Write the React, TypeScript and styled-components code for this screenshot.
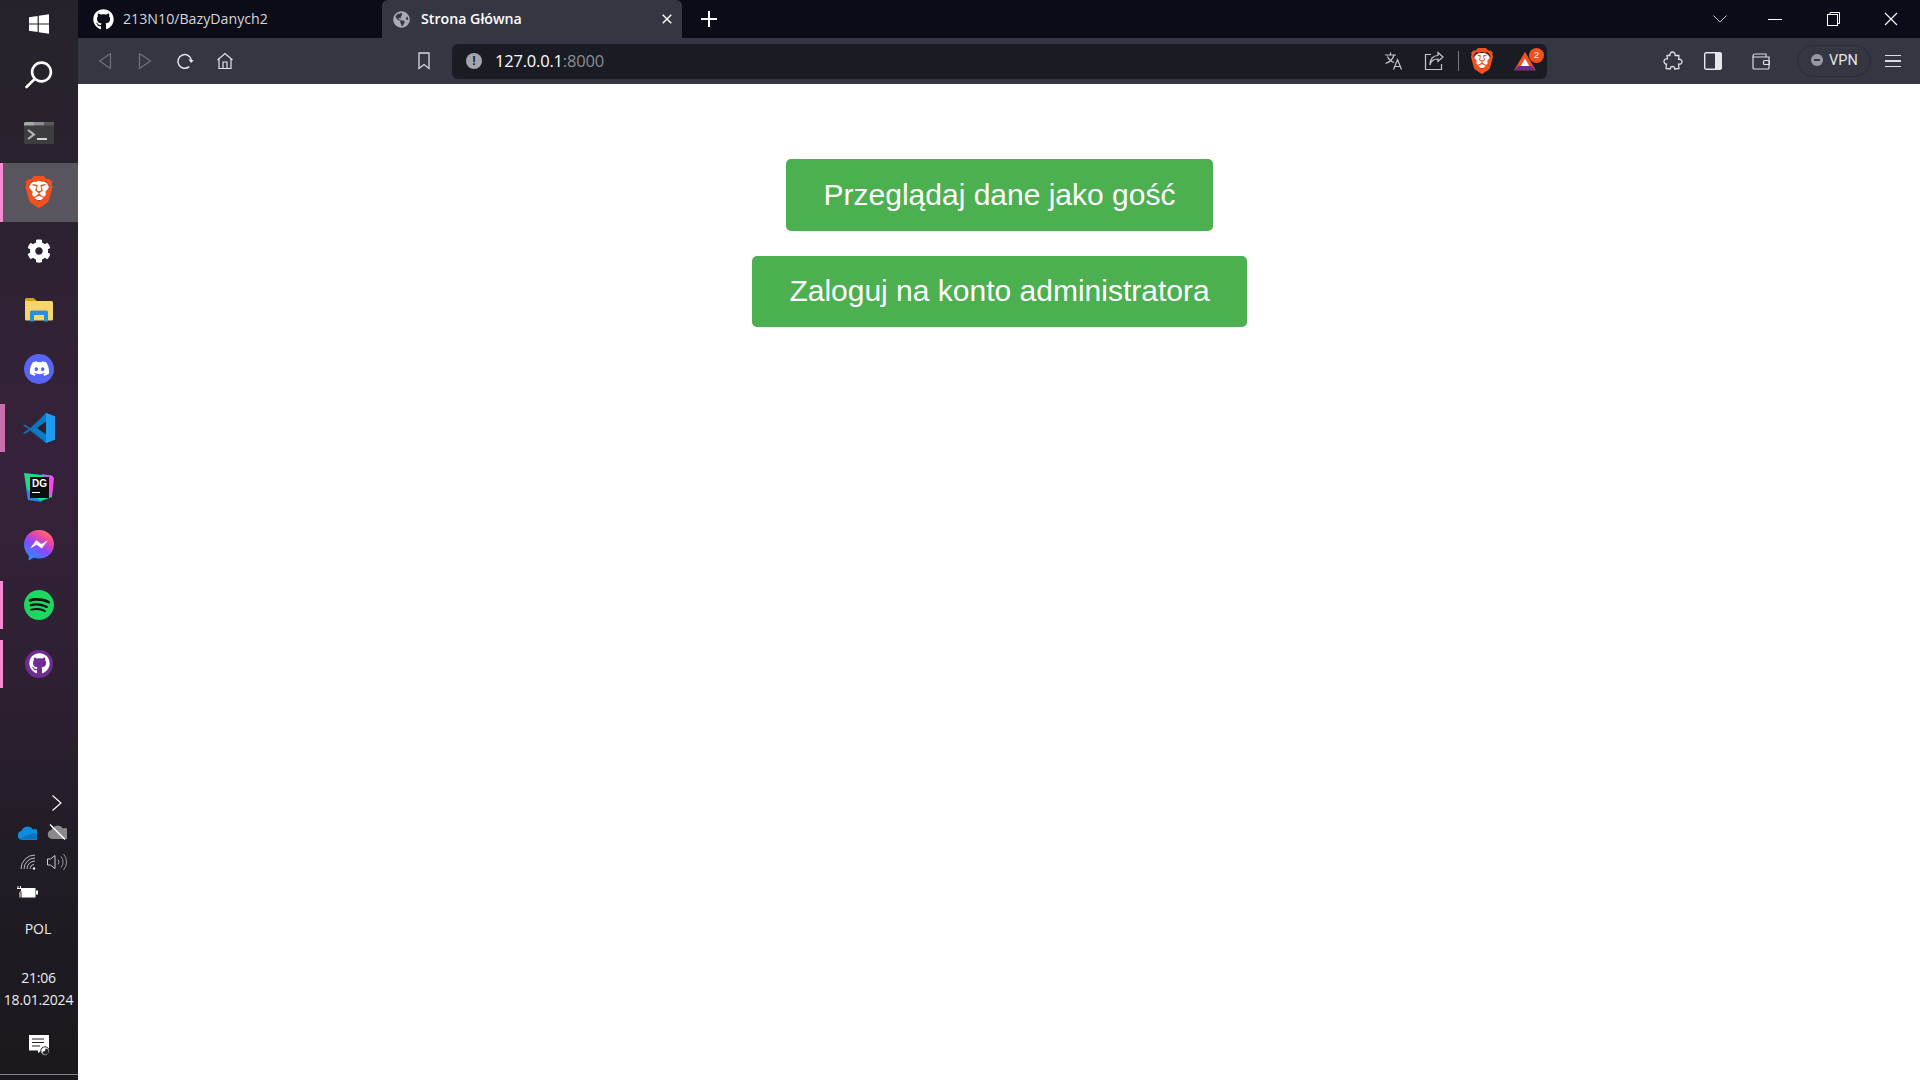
import React from 'react'
import styled, { createGlobalStyle } from 'styled-components'
import { FaCog, FaDiscord, FaGithub, FaGlobeAmericas } from 'react-icons/fa'
import { SiBrave, SiSpotify } from 'react-icons/si'

const GlobalStyle = createGlobalStyle`
  html, body { margin: 0; padding: 0; height: 100%; background: #fff; overflow: hidden; }
  #root { height: 100%; }
  * { box-sizing: border-box; }
`

const WindowsIcon = () => (
  <svg width="22" height="22" viewBox="0 0 22 22">
    <path d="M1 4.2 9.6 3v7.4H1zM10.8 2.8 21 1.2v9.2H10.8zM1 11.6h8.6V19L1 17.8zM10.8 11.6H21v9.2L10.8 19.2z" fill="#fff" />
  </svg>
)

const SearchIcon = () => (
  <svg width="30" height="30" viewBox="0 0 30 30" fill="none" stroke="#fff" strokeWidth="2.6" strokeLinecap="round">
    <circle cx="17.5" cy="12" r="9.4" />
    <path d="M10.8 18.8 2.5 27" />
  </svg>
)

const TerminalIcon = () => (
  <svg width="30" height="22" viewBox="0 0 30 22">
    <rect width="30" height="22" rx="1.5" fill="#3d3d3f" />
    <path d="M0 1.5A1.5 1.5 0 0 1 1.5 0H10v3.4H0z" fill="#a8a8a8" />
    <rect x="10" width="10" height="3.4" fill="#8c8c8c" />
    <rect x="20" width="10" height="3.4" fill="#5c5c5e" />
    <path d="m4 8 6 4.6L4 17" fill="none" stroke="#b9b9b9" strokeWidth="2" />
    <rect x="13" y="16" width="10" height="2" fill="#d6d6d6" />
  </svg>
)

const BraveIcon = ({ size }: { size: number }) => (
  <BraveWrap $size={size}>
    <BraveFace />
    <SiBrave size={size} color="#f1501f" />
  </BraveWrap>
)

const FolderIcon = () => (
  <svg width="28" height="24" viewBox="0 0 28 24">
    <path d="M0 1.5A1.5 1.5 0 0 1 1.5 0h7L12 3h-12z" fill="#d9a018" />
    <path d="M0 3h26.5A1.5 1.5 0 0 1 28 4.5V21a1.5 1.5 0 0 1-1.5 1.5h-25A1.5 1.5 0 0 1 0 21z" fill="#f7d56b" />
    <path d="M5 23.5V14a1.5 1.5 0 0 1 1.5-1.5h15A1.5 1.5 0 0 1 23 14v9.5h-4V17H9v6.5z" fill="#2d8fd0" />
  </svg>
)

const VsCodeIcon = () => (
  <svg width="32" height="32" viewBox="0 0 32 32">
    <path d="M23 1 32 4.5v23L23 31 9.5 18z" fill="#1f9cf0" />
    <path d="M23 1 7 16.2 2 12.4 0 13.6l5.7 3.4L0 21l2 1 5-3.4L23 31z" fill="#0a78bf" opacity=".92" />
    <path d="M23 9.5v13L13.8 16z" fill="#2a2232" />
    <path d="M23 1 32 4.5v23L23 31z" fill="#1f9cf0" />
  </svg>
)

const DataGripIcon = () => (
  <IconStack>
    <svg width="30" height="30" viewBox="0 0 30 30">
      <path d="M0 1 18 3 29 4 28 25 17 29 4 27 2 14z" fill="#22d88f" />
      <path d="M18 2 29 4 28 18 20 10z" fill="#9775f8" />
      <path d="M26 3 30 6 28 24 24 22z" fill="#ff45ed" />
      <path d="M2 16 14 27 18 30 4 28z" fill="#2f80ed" />
    </svg>
    <DgTile>
      DG
      <DgBar />
    </DgTile>
  </IconStack>
)

const MessengerIcon = () => (
  <svg width="30" height="31" viewBox="0 0 30 31">
    <defs>
      <linearGradient id="msgGrad" x1="0.2" y1="1" x2="0.8" y2="0">
        <stop offset="0" stopColor="#1497ff" />
        <stop offset="0.45" stopColor="#8d47ff" />
        <stop offset="0.75" stopColor="#f2489c" />
        <stop offset="1" stopColor="#ff7a5c" />
      </linearGradient>
    </defs>
    <path d="M15 0C6.5 0 0 6.2 0 14.5c0 4.4 1.8 8.2 4.7 10.8v5.2l4.9-2.700c1.700.5 3.500.8 5.400.8 8.500 0 15-6.200 15-14.100C30 6.200 23.500 0 15 0z" fill="url(#msgGrad)" />
    <path d="m6 18.5 6.300-8.200 5 3.800 6.700-3.800-6.300 8.200-5-3.800z" fill="#fff" />
  </svg>
)

const SpotifyIcon = () => (
  <IconStack>
    <SpotifyBack />
    <SiSpotify size={30} color="#1ed760" />
  </IconStack>
)

const CloudPath = 'M5 15a4.5 4.5 0 0 1-.6-8.9A6.5 6.5 0 0 1 16 4.5 4.8 4.8 0 0 1 20 15z'

const OneDriveIcon = () => (
  <svg width="20" height="15" viewBox="0 0 20 15">
    <path d={CloudPath} fill="#0f8bdc" />
    <path d="M2 14.5h17a3 3 0 0 0 1-4.5c-2-1.800-4-1.500-6-1-3 1-6 2-12 5.500z" fill="#0a5ea8" opacity=".55" />
  </svg>
)

const CloudOffIcon = () => (
  <svg width="20" height="16" viewBox="0 0 20 16">
    <path d={CloudPath} fill="#8a8a8c" />
    <path d="M3 .5 18 15.5" stroke="#fff" strokeWidth="1.4" />
  </svg>
)

const WifiIcon = () => (
  <svg width="16" height="16" viewBox="0 0 16 16" fill="none" stroke="#cfcfcf" strokeWidth=".9">
    <path d="M1 15A14 14 0 0 1 15 1M4 15A11 11 0 0 1 15 4M7 15a8 8 0 0 1 8-8M10 15a5 5 0 0 1 4-4.8" />
    <circle cx="14" cy="14.5" r="1.2" fill="#eee" stroke="none" />
  </svg>
)

const SoundIcon = () => (
  <svg width="20" height="18" viewBox="0 0 20 18" fill="none" stroke="#cfcfcf" strokeWidth="1">
    <path d="M.5 6h3L8 2.5v13L3.500 12H.5z" />
    <path d="M11 6.5a4 4 0 0 1 0 5M14 3.5a9 9 0 0 1 0 11M16.500 1a12 12 0 0 1 0 16" stroke="#9a9a9a" />
  </svg>
)

const BatteryIcon = () => (
  <svg width="21" height="12" viewBox="0 0 21 12">
    <path d="M1 0v2M3.5 0v2M0 2.500h4.500V5L3 6.500v5" fill="none" stroke="#fff" strokeWidth="1" />
    <rect x="4.5" y="2" width="14" height="9.5" fill="#fff" />
    <rect x="19" y="4.5" width="2" height="4" fill="#fff" />
  </svg>
)

const NotificationIcon = () => (
  <svg width="21" height="21" viewBox="0 0 21 21">
    <path d="M0 0h20v15.5h-7L9 18v-2.500H0z" fill="#fff" />
    <path d="M3 4h12M3 7.5h12M3 11h8" stroke="#28232a" strokeWidth="1.2" />
    <circle cx="16" cy="16" r="4.2" fill="#fff" stroke="#28232a" />
    <path d="M16.5 13.5a3 3 0 1 1-3 3c2 .5 3-1 3-3z" fill="#28232a" />
  </svg>
)

const BackIcon = ({ flip }: { flip?: boolean }) => (
  <svg width="14" height="18" viewBox="0 0 14 18" fill="none" stroke="#6c6f79" strokeWidth="1.3" style={flip ? { transform: 'scaleX(-1)' } : undefined}>
    <path d="M12.5 1.5v15L1.500 9z" strokeLinejoin="round" />
  </svg>
)

const ReloadIcon = () => (
  <svg width="18" height="18" viewBox="0 0 18 18" fill="none" stroke="#e4e5e8" strokeWidth="1.5">
    <path d="M15.5 8.5A6.8 6.8 0 1 0 13.2 14.6" />
    <path d="M12 7.8h5.500L15.500 11z" fill="#e4e5e8" stroke="none" transform="rotate(10 15 9)" />
  </svg>
)

const HomeIcon = () => (
  <svg width="18" height="18" viewBox="0 0 18 18" fill="none" stroke="#e4e5e8" strokeWidth="1.2">
    <path d="M1.5 8 9 1.500 16.500 8M3 7v9.500h12V7" />
    <path d="M7 16.5V10h4v6.500" />
  </svg>
)

const BookmarkIcon = () => (
  <svg width="12" height="18" viewBox="0 0 12 18" fill="none" stroke="#d8d9dd" strokeWidth="1.3">
    <path d="M1 1h10v15.5l-5-4-5 4z" />
  </svg>
)

const TranslateIcon = () => (
  <svg width="20" height="20" viewBox="0 0 20 20" fill="none" stroke="#c6c7cc" strokeWidth="1.2">
    <path d="M1 4h11M6.500 1.500V4M10 4c-1 4-4 7-8.500 8.500M3.500 5.500C5 9 7.500 10.500 10 11.500" />
    <path d="m9.500 18.500 4-10 4 10M11 15.500h5" />
  </svg>
)

const ShareIcon = () => (
  <svg width="20" height="20" viewBox="0 0 20 20" fill="none" stroke="#c6c7cc" strokeWidth="1.2">
    <path d="M7 3.500H1.500v15h16V13" />
    <path d="M14 1.500 19 6l-5 4.500V8c-4 0-7 1.500-8 6 0-6 3-9.500 8-9.500z" />
  </svg>
)

const RewardsIcon = () => (
  <svg width="24" height="20" viewBox="0 0 26 24">
    <path d="M13 1 26 23H0z" fill="#f1501f" />
    <path d="M0 23h26l-5-5H5z" fill="#6b2a8e" />
    <path d="M13 9 18 18H8z" fill="#fff" />
  </svg>
)

const PuzzleIcon = () => (
  <svg width="20" height="20" viewBox="0 0 20 20" fill="none" stroke="#dcdde0" strokeWidth="1.3" strokeLinejoin="round">
    <path d="M7 4.500C6.500 2.500 8 1 9.500 1s3 1.500 2.500 3.500h4l-.5 4c2-.8 3.500.5 3.500 2.200s-1.500 3-3.500 2.300l.5 4.500-4.500.5c.5-1.500-.5-2.500-2-2.500s-2.500 1-2 2.500l-4.500-.5.500-4.500C2.500 13.500 1 12 1 10.300s1.500-3 3.500-2.300L4 4.500z" />
  </svg>
)

const SidebarIcon = () => (
  <svg width="18" height="18" viewBox="0 0 18 18">
    <rect x=".7" y=".7" width="16.6" height="16.6" rx="1.5" fill="none" stroke="#e6e7ea" strokeWidth="1.4" />
    <rect x="11" y="1" width="6.5" height="16" fill="#e6e7ea" />
  </svg>
)

const WalletIcon = () => (
  <svg width="18" height="18" viewBox="0 0 18 18" fill="none" stroke="#dcdde0" strokeWidth="1.2">
    <path d="M1 4V16a1 1 0 0 0 1 1h14a1 1 0 0 0 1-1V5H2a1 1 0 0 1-1-1 2 2 0 0 1 2-2h11v3" />
    <rect x="11.5" y="8.5" width="6" height="4" rx="1" />
  </svg>
)

const RestoreIcon = () => (
  <svg width="13" height="14" viewBox="0 0 13 14" fill="none" stroke="#fff" strokeWidth="1">
    <rect x=".5" y="2.5" width="10" height="11" />
    <path d="M3 2.500V.5h9.500v11h-2" />
  </svg>
)

const CloseIcon = ({ size, weight }: { size: number; weight: number }) => (
  <svg width={size} height={size} viewBox="0 0 14 14" stroke="#fff" strokeWidth={weight}>
    <path d="m1 1 12 12M13 1 1 13" />
  </svg>
)

export default function App() {
  const apps = [
    { key: 'terminal', icon: <TerminalIcon /> },
    { key: 'brave', icon: <BraveIcon size={32} />, active: true, mark: 'full' },
    { key: 'settings', icon: <FaCog size={24} color="#fff" /> },
    { key: 'files', icon: <FolderIcon /> },
    { key: 'discord', icon: <DiscordCircle><FaDiscord size={21} color="#fff" /></DiscordCircle> },
    { key: 'vscode', icon: <VsCodeIcon />, mark: 'dim' },
    { key: 'datagrip', icon: <DataGripIcon /> },
    { key: 'messenger', icon: <MessengerIcon /> },
    { key: 'spotify', icon: <SpotifyIcon />, mark: 'bright' },
    { key: 'github', icon: <GithubDisc><FaGithub size={21} color="#fff" /></GithubDisc>, mark: 'bright' },
  ]

  return (
    <Page>
      <GlobalStyle />
      <Sidebar>
        <StartItem><WindowsIcon /></StartItem>
        <SearchItem><SearchIcon /></SearchItem>
        {apps.map((app) => (
          <SideItem key={app.key} $active={app.active} $mark={app.mark}>
            {app.icon}
          </SideItem>
        ))}
        <Tray>
          <TrayChevron>
            <svg width="12" height="18" viewBox="0 0 12 18" fill="none" stroke="#fff" strokeWidth="1.1">
              <path d="m1.500 1.500 8.500 7.500-8.500 7.500" />
            </svg>
          </TrayChevron>
          <TrayRow $gap={10}><OneDriveIcon /><CloudOffIcon /></TrayRow>
          <TrayRow $gap={11} $pad={20}><WifiIcon /><SoundIcon /></TrayRow>
          <TrayRow><BatteryIcon /></TrayRow>
          <LangLabel>POL</LangLabel>
          <Clock>
            <span>21:06</span>
            <span>18.01.2024</span>
          </Clock>
          <NotifyButton><NotificationIcon /></NotifyButton>
          <TrayEdge />
        </Tray>
      </Sidebar>

      <Browser>
        <TabStrip>
          <Tab>
            <FaGithub size={21} color="#fff" />
            <TabTitle>213N10/BazyDanych2</TabTitle>
          </Tab>
          <ActiveTab>
            <FaGlobeAmericas size={17} color="#a9abb2" />
            <TabTitle $active>Strona Główna</TabTitle>
            <TabClose><CloseIcon size={10} weight={2} /></TabClose>
          </ActiveTab>
          <NewTab>
            <svg width="16" height="16" viewBox="0 0 16 16" stroke="#fff" strokeWidth="2">
              <path d="M8 0v16M0 8h16" />
            </svg>
          </NewTab>
          <StripSpacer />
          <TabSearch>
            <svg width="14" height="8" viewBox="0 0 14 8" fill="none" stroke="#c8c9ce" strokeWidth="1">
              <path d="m.5.500 6.500 6.500 6.500-6.500" />
            </svg>
          </TabSearch>
          <WindowButton><MinimizeBar /></WindowButton>
          <WindowButton><RestoreIcon /></WindowButton>
          <WindowButton><CloseIcon size={14} weight={1.1} /></WindowButton>
        </TabStrip>

        <Toolbar>
          <NavGroup>
            <NavButton><BackIcon /></NavButton>
            <NavButton><BackIcon flip /></NavButton>
            <NavButton><ReloadIcon /></NavButton>
            <NavButton><HomeIcon /></NavButton>
          </NavGroup>
          <BookmarkSlot><BookmarkIcon /></BookmarkSlot>
          <UrlBar>
            <InfoDot>!</InfoDot>
            <UrlText>127.0.0.1<UrlPort>:8000</UrlPort></UrlText>
            <UrlActions>
              <UrlAction><TranslateIcon /></UrlAction>
              <UrlAction><ShareIcon /></UrlAction>
              <UrlDivider />
              <BraveSlot><BraveIcon size={26} /></BraveSlot>
              <RewardsSlot>
                <RewardsIcon />
                <RewardsBadge>2</RewardsBadge>
              </RewardsSlot>
            </UrlActions>
          </UrlBar>
          <ToolGroup>
            <ToolButton $width={40}><PuzzleIcon /></ToolButton>
            <ToolButton $width={39}><SidebarIcon /></ToolButton>
            <ToolButton $width={58}><WalletIcon /></ToolButton>
            <VpnPill><VpnDot />VPN</VpnPill>
            <MenuButton><MenuLine /><MenuLine /><MenuLine /></MenuButton>
          </ToolGroup>
        </Toolbar>

        <Content>
          <ActionButton>Przeglądaj dane jako gość</ActionButton>
          <ActionButton $compact>Zaloguj na konto administratora</ActionButton>
        </Content>
      </Browser>
    </Page>
  )
}

const Page = styled.div`
  display: flex;
  width: 1920px;
  height: 1080px;
  overflow: hidden;
`

const Sidebar = styled.aside`
  display: flex;
  flex-direction: column;
  flex: 0 0 78px;
  height: 100%;
  padding-bottom: 5px;
  background: linear-gradient(180deg, #26222b 0%, #2c2230 22%, #36223b 42%, #2e2032 62%, #221c26 78%, #1b181d 100%);
  font-family: 'Open Sans', sans-serif;
  color: #eee;
`

const StartItem = styled.div`
  display: flex;
  align-items: center;
  justify-content: center;
  height: 47px;
`

const SearchItem = styled.div`
  display: flex;
  align-items: center;
  justify-content: center;
  height: 56px;
  margin-bottom: 1px;
`

const SideItem = styled.div<{ $active?: boolean; $mark?: string }>`
  position: relative;
  display: flex;
  flex: 0 0 59px;
  align-items: center;
  justify-content: center;
  padding-bottom: 2px;
  background: ${(p) => (p.$active ? '#59555f' : 'transparent')};

  &::before {
    content: '';
    display: ${(p) => (p.$mark ? 'block' : 'none')};
    position: absolute;
    left: 0;
    top: ${(p) => (p.$mark === 'full' ? '0' : '5px')};
    bottom: ${(p) => (p.$mark === 'full' ? '0' : '6px')};
    width: ${(p) => (p.$mark === 'dim' ? '5px' : '3px')};
    background: ${(p) => (p.$mark === 'dim' ? '#c86fa9' : '#f58ad2')};
  }
`

const BraveWrap = styled.span<{ $size: number }>`
  position: relative;
  display: inline-flex;
  width: ${(p) => p.$size}px;
  height: ${(p) => p.$size}px;

  svg {
    position: relative;
  }
`

const BraveFace = styled.span`
  position: absolute;
  inset: 18% 20% 22%;
  background: #fff;
  border-radius: 40%;
`

const IconStack = styled.span`
  position: relative;
  display: inline-flex;
  align-items: center;
  justify-content: center;

  svg {
    position: relative;
  }
`

const DgTile = styled.span`
  position: absolute;
  left: 6px;
  top: 5px;
  width: 19px;
  height: 21px;
  padding: 1px 0 0 2px;
  background: #0c0d10;
  color: #fff;
  font: 700 10px/11px 'Liberation Sans', sans-serif;
`

const DgBar = styled.span`
  display: block;
  width: 8px;
  height: 1px;
  margin-top: 3px;
  background: #fff;
`

const DiscordCircle = styled.span`
  display: flex;
  align-items: center;
  justify-content: center;
  width: 30px;
  height: 30px;
  border-radius: 50%;
  background: #5865f2;
`

const SpotifyBack = styled.span`
  position: absolute;
  inset: 4px;
  border-radius: 50%;
  background: #111;
`

const GithubDisc = styled.span`
  display: flex;
  align-items: center;
  justify-content: center;
  width: 28px;
  height: 28px;
  border-radius: 50%;
  background: #6f2c91;
`

const Tray = styled.div`
  display: flex;
  flex-direction: column;
  margin-top: auto;
  align-items: center;
`

const TrayChevron = styled.div`
  display: flex;
  justify-content: flex-end;
  width: 100%;
  padding-right: 15px;
  height: 18px;
  margin-bottom: 5px;
`

const TrayRow = styled.div<{ $gap?: number; $pad?: number }>`
  display: flex;
  align-items: center;
  gap: ${(p) => p.$gap ?? 11}px;
  width: 100%;
  height: 30px;
  padding-left: ${(p) => p.$pad ?? 17}px;
`

const LangLabel = styled.div`
  margin-top: 12px;
  padding-right: 2px;
  font-size: 14px;
  line-height: 20px;
`

const Clock = styled.div`
  display: flex;
  flex-direction: column;
  align-items: center;
  margin-top: 28px;
  padding-right: 1px;
  font-size: 14px;
  line-height: 22px;
  letter-spacing: -0.2px;
`

const NotifyButton = styled.div`
  display: flex;
  align-items: center;
  justify-content: center;
  width: 100%;
  height: 21px;
  margin-top: 24px;
  margin-bottom: 18px;
`

const TrayEdge = styled.div`
  width: 100%;
  height: 1px;
  background: #86848a;
`

const Browser = styled.div`
  display: flex;
  flex-direction: column;
  flex: 1;
  min-width: 0;
`

const TabStrip = styled.div`
  display: flex;
  align-items: stretch;
  flex: 0 0 38px;
  background: #0b0c18;
  font-family: 'Open Sans', sans-serif;
`

const Tab = styled.div`
  display: flex;
  align-items: center;
  gap: 9px;
  width: 304px;
  padding-left: 15px;
`

const ActiveTab = styled.div`
  display: flex;
  align-items: center;
  gap: 11px;
  width: 300px;
  padding: 0 10px 0 11px;
  background: #343642;
  border-radius: 6px 6px 0 0;
`

const TabTitle = styled.span<{ $active?: boolean }>`
  flex: 1;
  padding-bottom: 2px;
  font-size: 14.2px;
  font-weight: ${(p) => (p.$active ? 600 : 400)};
  color: ${(p) => (p.$active ? '#fff' : '#d5d6da')};
  white-space: nowrap;
`

const TabClose = styled.span`
  display: flex;
  align-items: center;
`

const NewTab = styled.div`
  display: flex;
  align-items: center;
  padding-left: 19px;
`

const StripSpacer = styled.div`
  flex: 1;
`

const TabSearch = styled.div`
  display: flex;
  align-items: center;
  margin-right: 19px;
`

const WindowButton = styled.div`
  display: flex;
  align-items: center;
  justify-content: center;
  width: 58px;
`

const MinimizeBar = styled.span`
  display: block;
  width: 14px;
  height: 1px;
  background: #fff;
`

const Toolbar = styled.div`
  display: flex;
  align-items: center;
  flex: 0 0 46px;
  background: #343642;
  font-family: 'Open Sans', sans-serif;
`

const NavGroup = styled.div`
  display: flex;
  align-items: center;
  padding-left: 7px;
`

const NavButton = styled.div`
  display: flex;
  align-items: center;
  justify-content: center;
  width: 40px;
`

const BookmarkSlot = styled.div`
  display: flex;
  justify-content: center;
  width: 28px;
  margin-left: 165px;
`

const UrlBar = styled.div`
  display: flex;
  align-items: center;
  width: 1095px;
  height: 35px;
  margin-left: 14px;
  padding-left: 14px;
  background: #1a1c24;
  border-radius: 6px;
`

const InfoDot = styled.span`
  display: flex;
  align-items: center;
  justify-content: center;
  width: 16px;
  height: 16px;
  border-radius: 50%;
  background: #a3a5ab;
  color: #1a1c24;
  font: 700 12px/16px 'Liberation Sans', sans-serif;
`

const UrlText = styled.span`
  margin-left: 13px;
  padding-bottom: 2px;
  font-size: 16.5px;
  color: #fff;
  letter-spacing: -0.2px;
`

const UrlPort = styled.span`
  color: #8b8d94;
`

const UrlActions = styled.div`
  display: flex;
  align-items: center;
  margin-left: auto;
`

const UrlAction = styled.div`
  display: flex;
  justify-content: center;
  width: 40px;
`

const UrlDivider = styled.span`
  display: block;
  width: 1px;
  height: 20px;
  margin: 0 10px 0 4px;
  background: #777982;
`

const BraveSlot = styled.div`
  display: flex;
  margin-right: 18px;
`

const RewardsSlot = styled.div`
  position: relative;
  display: flex;
  margin-right: 10px;
`

const RewardsBadge = styled.span`
  position: absolute;
  top: -3px;
  right: -7px;
  width: 15px;
  height: 15px;
  border-radius: 50%;
  background: #f1501f;
  color: #fff;
  text-align: center;
  font: 400 9px/15px 'Liberation Sans', sans-serif;
`

const ToolGroup = styled.div`
  display: flex;
  align-items: center;
  margin-left: 106px;
`

const ToolButton = styled.div<{ $width: number }>`
  display: flex;
  justify-content: center;
  width: ${(p) => p.$width}px;
`

const VpnPill = styled.div`
  display: flex;
  align-items: center;
  gap: 6px;
  width: 74px;
  height: 32px;
  margin-left: 7px;
  padding: 0 0 2px 13px;
  border: 1px solid #2a2c36;
  border-radius: 16px;
  color: #e4e5e8;
  font: 400 14.5px 'Roboto', sans-serif;
`

const VpnDot = styled.span`
  position: relative;
  width: 12px;
  height: 12px;
  border-radius: 50%;
  background: #9799a2;

  &::after {
    content: '';
    position: absolute;
    left: 3px;
    right: 3px;
    top: 5px;
    height: 2px;
    background: #343642;
  }
`

const MenuButton = styled.div`
  display: flex;
  flex-direction: column;
  gap: 4px;
  width: 16px;
  margin-left: 14px;
`

const MenuLine = styled.span`
  display: block;
  height: 1.5px;
  background: #dcdde0;
`

const Content = styled.main`
  display: flex;
  flex-direction: column;
  align-items: center;
  flex: 1;
  gap: 25px;
  padding: 75px 0 0 1px;
  background: #fff;
`

const ActionButton = styled.a<{ $compact?: boolean }>`
  display: block;
  padding: ${(p) => (p.$compact ? '19px' : '20px')} 37.5px 20px;
  background: #4caf50;
  border-radius: 5px;
  color: #fff;
  font: 400 30px/32px 'Liberation Sans', Arial, sans-serif;
`
